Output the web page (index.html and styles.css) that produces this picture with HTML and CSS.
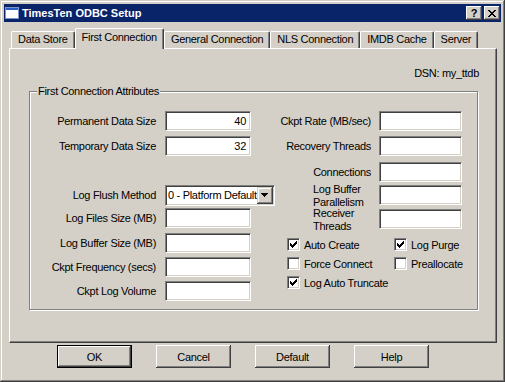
FILE: index.html
```html
<!DOCTYPE html>
<html lang="en">
<head>
    <meta charset="UTF-8">
    <title>TimesTen ODBC Setup</title>
    <link rel="stylesheet" href="styles.css">
</head>
<body>
    <div class="window">
        <div class="titlebar">
            <svg class="app-icon" viewBox="0 0 14 12" width="14" height="12">
                <rect x="0" y="0" width="14" height="12" fill="#ffffff"/>
                <rect x="0" y="0" width="14" height="3" fill="#2a5fc4"/>
                <rect x="0.5" y="0.5" width="13" height="11" fill="none" stroke="#7f93c9"/>
            </svg>
            <span class="title">TimesTen ODBC Setup</span>
            <div class="caption-buttons">
                <span class="caption-btn">?</span>
                <span class="caption-btn">
                    <svg viewBox="0 0 8 7" width="8" height="7" shape-rendering="crispEdges">
                        <path d="M0 0h2v1H0zM6 0h2v1H6zM1 1h2v1H1zM5 1h2v1H5zM2 2h4v1H2zM3 3h2v1H3zM2 4h4v1H2zM1 5h2v1H1zM5 5h2v1H5zM0 6h2v1H0zM6 6h2v1H6z" fill="#000"/>
                    </svg>
                </span>
            </div>
        </div>

        <div class="dialog">
            <div class="tabs">
                <div class="tab">Data Store</div>
                <div class="tab active">First Connection</div>
                <div class="tab">General Connection</div>
                <div class="tab">NLS Connection</div>
                <div class="tab">IMDB Cache</div>
                <div class="tab">Server</div>
            </div>

            <div class="panel">
                <div class="dsn">DSN: my_ttdb</div>

                <div class="group">
                    <span class="legend">First Connection Attributes</span>

                    <div class="col-left">
                        <div class="row">
                            <label>Permanent Data Size</label>
                            <div class="field num">40</div>
                        </div>
                        <div class="row gap5">
                            <label>Temporary Data Size</label>
                            <div class="field num">32</div>
                        </div>
                        <div class="row gap29">
                            <label>Log Flush Method</label>
                            <div class="select">
                                <span class="select-text">0 - Platform Default</span>
                                <span class="select-btn">
                                    <svg viewBox="0 0 7 4" width="7" height="4" shape-rendering="crispEdges">
                                        <path d="M0 0h7v1H0zM1 1h5v1H1zM2 2h3v1H2zM3 3h1v1H3z" fill="#000"/>
                                    </svg>
                                </span>
                            </div>
                        </div>
                        <div class="row gap3">
                            <label>Log Files Size (MB)</label>
                            <div class="field"></div>
                        </div>
                        <div class="row gap5">
                            <label>Log Buffer Size (MB)</label>
                            <div class="field"></div>
                        </div>
                        <div class="row gap4">
                            <label>Ckpt Frequency (secs)</label>
                            <div class="field"></div>
                        </div>
                        <div class="row gap4">
                            <label>Ckpt Log Volume</label>
                            <div class="field"></div>
                        </div>
                    </div>

                    <div class="col-right">
                        <div class="row">
                            <label>Ckpt Rate (MB/sec)</label>
                            <div class="field short"></div>
                        </div>
                        <div class="row gap5">
                            <label>Recovery Threads</label>
                            <div class="field short"></div>
                        </div>
                        <div class="row gap6">
                            <label>Connections</label>
                            <div class="field short"></div>
                        </div>
                        <div class="row gap3">
                            <label class="multi"><span>Log Buffer Parallelism</span></label>
                            <div class="field short"></div>
                        </div>
                        <div class="row gap4">
                            <label class="multi"><span>Receiver Threads</span></label>
                            <div class="field short"></div>
                        </div>

                        <div class="checks">
                            <div class="check">
                                <span class="box"><svg viewBox="0 0 9 9" width="9" height="9" shape-rendering="crispEdges"><path d="M1 3h1v3H1zM2 4h1v3H2zM3 5h1v3H3zM4 4h1v3H4zM5 3h1v3H5zM6 2h1v3H6zM7 1h1v3H7z" fill="#000"/></svg></span>
                                Auto Create
                            </div>
                            <div class="check">
                                <span class="box"><svg viewBox="0 0 9 9" width="9" height="9" shape-rendering="crispEdges"><path d="M1 3h1v3H1zM2 4h1v3H2zM3 5h1v3H3zM4 4h1v3H4zM5 3h1v3H5zM6 2h1v3H6zM7 1h1v3H7z" fill="#000"/></svg></span>
                                Log Purge
                            </div>
                            <div class="check">
                                <span class="box"></span>
                                Force Connect
                            </div>
                            <div class="check">
                                <span class="box"></span>
                                Preallocate
                            </div>
                            <div class="check">
                                <span class="box"><svg viewBox="0 0 9 9" width="9" height="9" shape-rendering="crispEdges"><path d="M1 3h1v3H1zM2 4h1v3H2zM3 5h1v3H3zM4 4h1v3H4zM5 3h1v3H5zM6 2h1v3H6zM7 1h1v3H7z" fill="#000"/></svg></span>
                                Log Auto Truncate
                            </div>
                        </div>
                    </div>
                </div>
            </div>

            <div class="buttons">
                <button class="btn default">OK</button>
                <button class="btn">Cancel</button>
                <button class="btn">Default</button>
                <button class="btn">Help</button>
            </div>
        </div>
    </div>
</body>
</html>
```

FILE: styles.css
```css
body {
    margin: 0;
    background-color: #d4d0c8;
    font-family: "Liberation Sans", Arial, sans-serif;
    font-size: 11px;
    letter-spacing: -0.3px;
    color: #000;
}

.window {
    width: 505px;
    height: 382px;
    box-sizing: border-box;
    padding: 4px;
    background-color: #d4d0c8;
    box-shadow: inset -1px -1px 0 #404040, inset 1px 1px 0 #d4d0c8,
                inset -2px -2px 0 #808080, inset 2px 2px 0 #ffffff;
}

/* title bar */
.titlebar {
    height: 18px;
    background-color: #0a246a;
    display: flex;
    align-items: center;
    color: #fff;
}

.app-icon {
    flex: none;
    margin: 0 3px 0 1px;
}

.title {
    flex: 1;
    font-weight: bold;
    letter-spacing: 0;
}

.caption-buttons {
    display: flex;
    gap: 2px;
    margin-right: 1px;
}

.caption-btn {
    width: 16px;
    height: 14px;
    box-sizing: border-box;
    display: flex;
    align-items: center;
    justify-content: center;
    background-color: #d4d0c8;
    color: #000;
    font-weight: bold;
    font-size: 11px;
    letter-spacing: 0;
    box-shadow: inset -1px -1px 0 #404040, inset 1px 1px 0 #ffffff,
                inset -2px -2px 0 #808080;
}

/* dialog body */
.dialog {
    padding: 6px 0 0 5px;
}

.tabs {
    display: flex;
    height: 20px;
    margin-left: 2px;
    position: relative;
    z-index: 1;
}

.tab {
    height: 17px;
    margin-top: 3px;
    padding: 0 6px;
    box-sizing: border-box;
    border-left: 1px solid #fff;
    border-top: 1px solid #fff;
    border-right: 1px solid #404040;
    border-radius: 2px 2px 0 0;
    box-shadow: inset -1px 0 0 #808080;
    line-height: 15px;
    white-space: nowrap;
}

.tab.active {
    height: 21px;
    margin-top: 0;
    line-height: 17px;
    background-color: #d4d0c8;
}

.panel {
    width: 488px;
    height: 295px;
    box-sizing: border-box;
    border-top: 1px solid #fff;
    border-left: 1px solid #fff;
    border-right: 1px solid #404040;
    border-bottom: 1px solid #404040;
    box-shadow: inset -1px -1px 0 #808080;
}

.dsn {
    text-align: right;
    line-height: 13px;
    padding: 18px 17px 0 0;
}

.group {
    position: relative;
    width: 449px;
    height: 219px;
    box-sizing: border-box;
    margin: 11px 0 0 19px;
    padding-top: 19px;
    border: 1px solid #808080;
    box-shadow: inset 1px 1px 0 #fff, 1px 1px 0 #fff;
    display: flex;
}

.legend {
    position: absolute;
    left: 7px;
    top: -7px;
    padding: 0 1px;
    line-height: 13px;
    background-color: #d4d0c8;
}

.col-left {
    width: 221px;
    flex: none;
}

.col-right {
    width: 211px;
    flex: none;
}

.row {
    display: flex;
    align-items: center;
    height: 20px;
}

.row label {
    flex: none;
    text-align: right;
    white-space: nowrap;
}

.col-left .row label {
    width: 126px;
    margin-right: 9px;
}

.col-right .row label {
    width: 120px;
    margin-right: 8px;
}

.row label.multi {
    display: flex;
    justify-content: flex-end;
    align-self: flex-start;
    margin-top: -2px;
    white-space: normal;
}

.row label.multi span {
    width: 58px;
    text-align: left;
    line-height: 13px;
}

.gap3 { margin-top: 3px; }
.gap4 { margin-top: 4px; }
.gap5 { margin-top: 5px; }
.gap6 { margin-top: 6px; }
.gap29 { margin-top: 29px; }

.field {
    width: 86px;
    height: 20px;
    box-sizing: border-box;
    background-color: #fff;
    border: 1px solid;
    border-color: #808080 #fff #fff #808080;
    box-shadow: inset 1px 1px 0 #404040, inset -1px -1px 0 #d4d0c8;
    padding: 0 4px;
    line-height: 18px;
}

.field.short {
    width: 83px;
}

.field.num {
    text-align: right;
}

.select {
    width: 134px;
    height: 21px;
    box-sizing: border-box;
    display: flex;
    align-items: center;
    background-color: #fff;
    border: 1px solid;
    border-color: #808080 #fff #fff #808080;
    box-shadow: inset 1px 1px 0 #404040, inset -1px -1px 0 #d4d0c8;
    padding: 1px;
}

.select-text {
    flex: 1;
    padding-left: 1px;
    white-space: nowrap;
}

.select-btn {
    width: 16px;
    height: 17px;
    box-sizing: border-box;
    display: flex;
    align-items: center;
    justify-content: center;
    background-color: #d4d0c8;
    box-shadow: inset -1px -1px 0 #404040, inset 1px 1px 0 #d4d0c8,
                inset -2px -2px 0 #808080, inset 2px 2px 0 #ffffff;
}

.checks {
    display: grid;
    grid-template-columns: 107px auto;
    row-gap: 6px;
    margin: 9px 0 0 36px;
}

.check {
    display: flex;
    align-items: center;
    height: 13px;
    white-space: nowrap;
}

.box {
    width: 13px;
    height: 13px;
    box-sizing: border-box;
    margin-right: 4px;
    padding: 1px;
    display: flex;
    align-items: center;
    justify-content: center;
    background-color: #fff;
    border: 1px solid;
    border-color: #808080 #fff #fff #808080;
    box-shadow: inset 1px 1px 0 #404040, inset -1px -1px 0 #d4d0c8;
}

/* bottom buttons */
.buttons {
    display: flex;
    gap: 24px;
    margin: 2px 0 0 48px;
}

.btn {
    width: 75px;
    height: 23px;
    box-sizing: border-box;
    padding: 0;
    font-family: inherit;
    font-size: 11px;
    letter-spacing: -0.3px;
    color: #000;
    background-color: #d4d0c8;
    border: none;
    box-shadow: inset -1px -1px 0 #404040, inset 1px 1px 0 #ffffff,
                inset -2px -2px 0 #808080;
}

.btn.default {
    box-shadow: inset 0 0 0 1px #000, inset -2px -2px 0 #404040,
                inset 2px 2px 0 #ffffff, inset -3px -3px 0 #808080;
}
```
